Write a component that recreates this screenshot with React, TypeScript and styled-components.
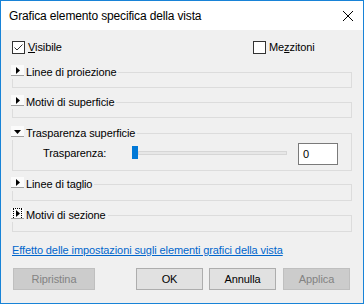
import React from "react";
import styled, { createGlobalStyle } from "styled-components";

const Global = createGlobalStyle`
  html, body { margin: 0; padding: 0; background: #ffffff; }
  body { font-family: "Liberation Sans", Arial, sans-serif; }
`;

const Window = styled.div`
  width: 364px;
  height: 304px;
  box-sizing: border-box;
  border: 1px solid #1883d7;
  display: flex;
  flex-direction: column;
  background: #f0f0f0;
  font-family: "Liberation Sans", Arial, sans-serif;
  font-size: 11px;
  letter-spacing: -0.1px;
  color: #000;
`;

const TitleBar = styled.div`
  height: 29px;
  flex: none;
  background: #ffffff;
  display: flex;
  align-items: center;
  justify-content: space-between;
  padding: 0 10px 0 8px;
`;

const Title = styled.span`
  font-size: 12px;
  letter-spacing: -0.15px;
`;

const CloseIcon = styled.svg`
  width: 10px;
  height: 10px;
  display: block;
`;

const Content = styled.div`
  flex: 1;
  display: flex;
  flex-direction: column;
  padding-top: 11px;
`;

const CheckRow = styled.div`
  display: flex;
  align-items: center;
  height: 13px;
  padding-left: 11px;
`;

const CheckItem = styled.label<{ $width?: number }>`
  display: flex;
  align-items: center;
  gap: 3px;
  width: ${(p) => (p.$width ? `${p.$width}px` : "auto")};
  line-height: 13px;
`;

const Box = styled.span`
  width: 13px;
  height: 13px;
  box-sizing: border-box;
  border: 1px solid #333333;
  background: #ffffff;
  display: flex;
  align-items: center;
  justify-content: center;
`;

const Key = styled.span`
  text-decoration: underline;
`;

const Groups = styled.div`
  display: flex;
  flex-direction: column;
  padding-left: 11px;
`;

const Group = styled.fieldset<{ $mt: number }>`
  margin: ${(p) => p.$mt}px 0 0;
  padding: 0;
  border: 1px solid #dcdcdc;
  width: 340px;
  min-width: 0;
  box-sizing: border-box;
`;

const Legend = styled.legend`
  display: flex;
  align-items: center;
  height: 14px;
  line-height: 14px;
  padding: 0 2px 0 0;
  margin-left: -2px;
  background: #f0f0f0;
`;

const Toggle = styled.span<{ $focused?: boolean }>`
  width: 13px;
  height: 11px;
  box-sizing: border-box;
  align-self: flex-start;
  background: #fbfbfb;
  border-bottom: 1px solid #a0a0a0;
  margin-right: 2px;
  display: flex;
  align-items: center;
  justify-content: center;
  position: relative;
  &::after {
    content: "";
    display: ${(p) => (p.$focused ? "block" : "none")};
    position: absolute;
    left: 2px;
    right: 2px;
    top: 0;
    bottom: 0;
    border-left: 1px dotted #000;
    border-right: 1px dotted #000;
    border-top: 1px dotted #000;
  }
`;

const GroupBody = styled.div<{ $h: number }>`
  height: ${(p) => p.$h}px;
  box-sizing: border-box;
  display: flow-root;
`;

const SliderRow = styled.div`
  display: flex;
  align-items: center;
  height: 22px;
  margin-top: 3px;
  padding-left: 30px;
`;

const FieldLabel = styled.span`
  width: 89px;
  margin-top: -3px;
`;

const Slider = styled.div`
  position: relative;
  width: 155px;
  height: 13px;
  margin-top: -3px;
  display: flex;
  align-items: center;
`;

const Track = styled.div`
  margin-left: 6px;
  flex: 1;
  height: 4px;
  box-sizing: border-box;
  background: #e7e7e7;
  border: 1px solid #d6d6d6;
`;

const Thumb = styled.div`
  position: absolute;
  top: 0;
  width: 6px;
  height: 13px;
  background: #0078d7;
`;

const NumberBox = styled.div`
  margin-left: 11px;
  width: 40px;
  height: 22px;
  box-sizing: border-box;
  border: 1px solid #7a7a7a;
  background: #ffffff;
  padding-left: 4px;
  display: flex;
  align-items: center;
`;

const Link = styled.a`
  margin: 11px 0 0 11px;
  color: #0066cc;
  text-decoration: underline;
  line-height: 14px;
  align-self: flex-start;
  cursor: pointer;
`;

const ButtonRow = styled.div`
  margin-top: auto;
  display: flex;
  padding: 0 13px 13px 12px;
`;

const Button = styled.button<{ $w: number; $ml?: number }>`
  width: ${(p) => p.$w}px;
  height: 22px;
  margin-left: ${(p) => (p.$ml ? `${p.$ml}px` : "0")};
  box-sizing: border-box;
  border: 1px solid #adadad;
  background: #e1e1e1;
  color: #000;
  font-family: "Liberation Sans", Arial, sans-serif;
  font-size: 11px;
  letter-spacing: -0.1px;
  padding: 0;
  &:disabled {
    background: #cccccc;
    border-color: #bfbfbf;
    color: #838383;
  }
`;

const Spacer = styled.div`
  flex: 1;
`;

const Arrow = ({ open }: { open?: boolean }) =>
  open ? (
    <svg width="7" height="4" viewBox="0 0 7 4" style={{ display: "block", marginTop: 1 }}>
      <polygon points="0,0 7,0 3.5,4" fill="#000" />
    </svg>
  ) : (
    <svg width="4" height="7" viewBox="0 0 4 7" style={{ display: "block" }}>
      <polygon points="0,0 4,3.5 0,7" fill="#000" />
    </svg>
  );

const Check = () => (
  <svg width="11" height="11" viewBox="0 0 11 11">
    <polyline points="1.5,5.5 4,8 9.5,2.5" fill="none" stroke="#333" strokeWidth="1" />
  </svg>
);

type GroupDef = { title: string; open?: boolean; focused?: boolean; h: number; mt: number };

const groups: GroupDef[] = [
  { title: "Linee di proiezione", h: 8, mt: 11 },
  { title: "Motivi di superficie", h: 8, mt: 7 },
  { title: "Trasparenza superficie", open: true, h: 30, mt: 8 },
  { title: "Linee di taglio", h: 9, mt: 6 },
  { title: "Motivi di sezione", focused: true, h: 9, mt: 7 },
];

export default function App() {
  return (
    <>
      <Global />
      <Window>
        <TitleBar>
          <Title>Grafica elemento specifica della vista</Title>
          <CloseIcon viewBox="0 0 10 10">
            <line x1="0" y1="0" x2="10" y2="10" stroke="#000" strokeWidth="1" />
            <line x1="10" y1="0" x2="0" y2="10" stroke="#000" strokeWidth="1" />
          </CloseIcon>
        </TitleBar>
        <Content>
          <CheckRow>
            <CheckItem $width={241}>
              <Box>
                <Check />
              </Box>
              <span>
                <Key>V</Key>isibile
              </span>
            </CheckItem>
            <CheckItem>
              <Box />
              <span>
                Me<Key>z</Key>zitoni
              </span>
            </CheckItem>
          </CheckRow>
          <Groups>
            {groups.map((g) => (
              <Group key={g.title} $mt={g.mt}>
                <Legend>
                  <Toggle $focused={g.focused}>
                    <Arrow open={g.open} />
                  </Toggle>
                  {g.title}
                </Legend>
                <GroupBody $h={g.h}>
                  {g.open && (
                    <SliderRow>
                      <FieldLabel>Trasparenza:</FieldLabel>
                      <Slider>
                        <Track />
                        <Thumb style={{ left: 0 }} />
                      </Slider>
                      <NumberBox>0</NumberBox>
                    </SliderRow>
                  )}
                </GroupBody>
              </Group>
            ))}
          </Groups>
          <Link>Effetto delle impostazioni sugli elementi grafici della vista</Link>
          <ButtonRow>
            <Button $w={82} disabled>
              Ripristina
            </Button>
            <Spacer />
            <Button $w={67}>OK</Button>
            <Button $w={67} $ml={6}>
              Annulla
            </Button>
            <Button $w={67} $ml={7} disabled>
              Applica
            </Button>
          </ButtonRow>
        </Content>
      </Window>
    </>
  );
}
